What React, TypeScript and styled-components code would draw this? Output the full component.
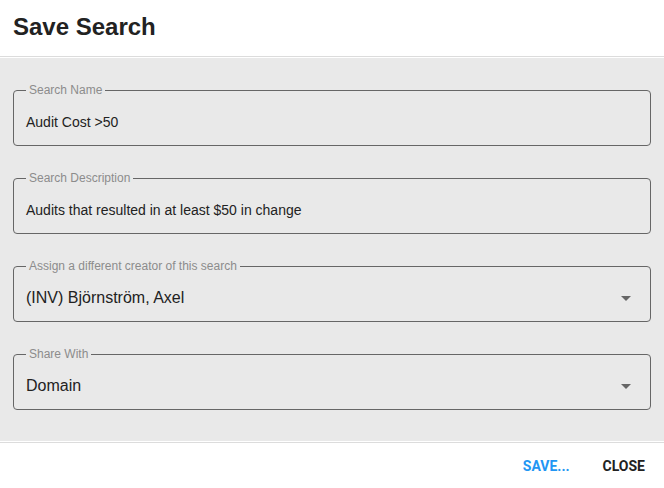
import styled, { createGlobalStyle } from 'styled-components';

const GlobalStyle = createGlobalStyle`
  html, body {
    margin: 0;
    padding: 0;
    background: #ffffff;
  }
  body {
    font-family: 'Liberation Sans', Arial, sans-serif;
    color: #222222;
  }
`;

const Dialog = styled.div`
  width: 664px;
  height: 488px;
  display: flex;
  flex-direction: column;
  background: #ffffff;
`;

const Header = styled.div`
  height: 57px;
  box-sizing: border-box;
  padding: 15px 13px 0;
  border-bottom: 1px solid #dcdcdc;
`;

const Title = styled.h2`
  margin: 0;
  font-size: 24px;
  line-height: 24px;
  font-weight: 700;
  color: #222222;
`;

const Body = styled.div`
  margin-top: 1px;
  background: #e9e9e9;
  padding: 25px 13px 31px 13px;
  display: flex;
  flex-direction: column;
  gap: 25px;
`;

const Field = styled.fieldset`
  margin: 0;
  padding: 0 12px;
  border: 1px solid #666666;
  border-radius: 4px;
  width: 638px;
  box-sizing: border-box;
  min-width: 0;
`;

const Label = styled.legend`
  margin-left: 0;
  padding: 0 3px;
  font-size: 12px;
  line-height: 14px;
  color: #8c8c8c;
`;

const Content = styled.div<{ $large?: boolean }>`
  height: 48px;
  box-sizing: border-box;
  padding-top: 2px;
  display: flex;
  align-items: center;
  justify-content: space-between;
  font-size: ${(p) => (p.$large ? '16px' : '14px')};
  color: #222222;
`;

const Arrow = styled.svg`
  width: 24px;
  height: 24px;
  fill: #666666;
  flex-shrink: 0;
`;

const Footer = styled.div`
  margin-top: 1px;
  border-top: 1px solid #dcdcdc;
  flex: 1;
  display: flex;
  justify-content: flex-end;
  align-items: center;
  gap: 33px;
  padding: 0 19px 0 0;
`;

const Button = styled.button<{ $primary?: boolean }>`
  border: none;
  background: none;
  padding: 0;
  font-family: Roboto, 'Liberation Sans', sans-serif;
  font-size: 14px;
  font-weight: 700;
  color: ${(p) => (p.$primary ? '#2196f3' : '#222222')};
  cursor: pointer;
`;

function DropArrow() {
  return (
    <Arrow viewBox="0 0 24 24">
      <path d="M7 10l5 5 5-5z" />
    </Arrow>
  );
}

const fields = [
  { label: 'Search Name', value: 'Audit Cost >50', select: false },
  { label: 'Search Description', value: 'Audits that resulted in at least $50 in change', select: false },
  { label: 'Assign a different creator of this search', value: '(INV) Björnström, Axel', select: true },
  { label: 'Share With', value: 'Domain', select: true },
];

export default function App() {
  return (
    <>
      <GlobalStyle />
      <Dialog>
        <Header>
          <Title>Save Search</Title>
        </Header>
        <Body>
          {fields.map((f) => (
            <Field key={f.label}>
              <Label>{f.label}</Label>
              <Content $large={f.select}>
                <span>{f.value}</span>
                {f.select && <DropArrow />}
              </Content>
            </Field>
          ))}
        </Body>
        <Footer>
          <Button $primary>SAVE...</Button>
          <Button>CLOSE</Button>
        </Footer>
      </Dialog>
    </>
  );
}
